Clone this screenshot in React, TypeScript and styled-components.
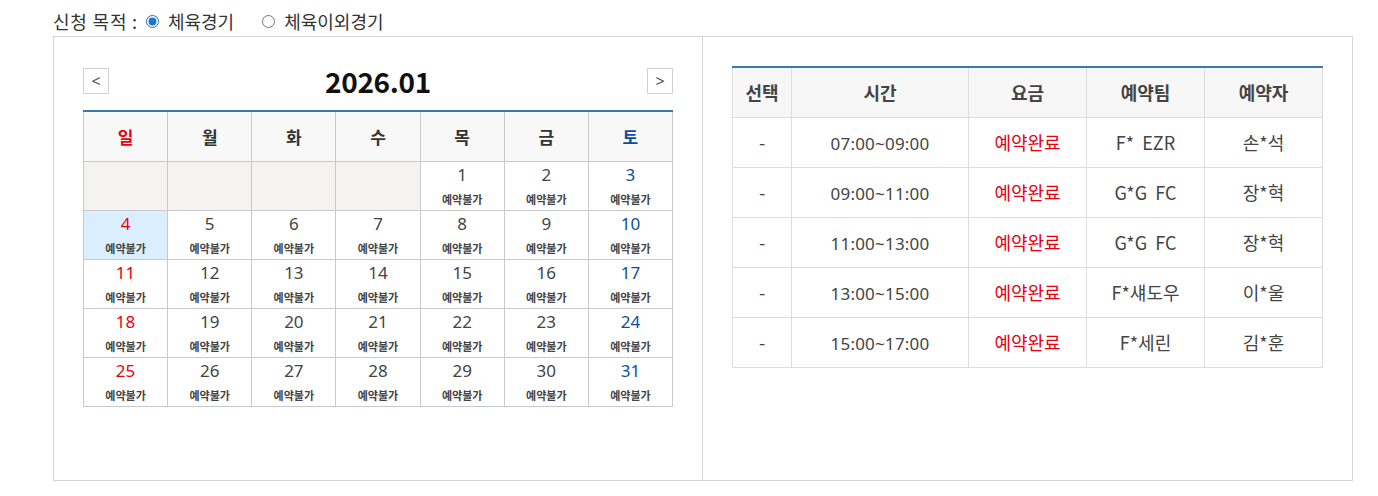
import React from "react";
import styled, { createGlobalStyle } from "styled-components";

const GlobalStyle = createGlobalStyle`
  html, body { margin: 0; padding: 0; background: #fff; }
  body { font-family: "Noto Sans CJK KR", "Noto Sans", sans-serif; color: #333; }
  * { box-sizing: border-box; }
`;

const Page = styled.div`
  padding: 6px 0 0 53px;
  width: 1378px;
`;

const PurposeRow = styled.div`
  display: flex;
  align-items: center;
  height: 30px;
  font-size: 18px;
  line-height: 22px;
  color: #333;
`;

const PurposeLabel = styled.span`
  margin-right: 8px;
  letter-spacing: 0.8px;
`;

const RadioLabel = styled.label<{ $gap?: number }>`
  display: inline-flex;
  align-items: center;
  margin-right: ${(p) => p.$gap ?? 0}px;
  cursor: pointer;
  input {
    margin: 0 9px 0 0;
    width: 13px;
    height: 13px;
    accent-color: #1a73d9;
  }
`;

const Box = styled.div`
  display: grid;
  grid-template-columns: 649px 1fr;
  width: 1300px;
  height: 445px;
  border: 1px solid #d4d4d4;
`;

const LeftPanel = styled.div`
  border-right: 1px solid #d4d4d4;
  padding: 31px 0 0 29px;
`;

const RightPanel = styled.div`
  padding: 29px 0 0 29px;
`;

const CalNav = styled.div`
  display: flex;
  align-items: center;
  justify-content: space-between;
  width: 590px;
  height: 26px;
  margin-bottom: 16px;
`;

const NavButton = styled.button`
  width: 26px;
  height: 26px;
  border: 1px solid #d0d0d0;
  background: #fff;
  color: #555;
  font-family: "Noto Sans", sans-serif;
  font-size: 16px;
  line-height: 22px;
  padding: 0;
  cursor: pointer;
`;

const CalTitle = styled.h2`
  margin: 0;
  font-size: 28px;
  line-height: 30px;
  font-weight: 700;
  color: #111;
  letter-spacing: -0.3px;
`;

const CalTable = styled.table`
  width: 590px;
  border-collapse: collapse;
  table-layout: fixed;
  border-top: 2px solid #3a77b5;
  th, td {
    border: 1px solid #c9c9c9;
    text-align: center;
    padding: 0;
  }
  tr:first-child th { border-top: none; }
`;

const dayColor = (d: string) => (d === "sun" ? "#e60012" : d === "sat" ? "#0b4f9e" : "#333");

const CalHead = styled.th<{ $day: string }>`
  height: 50px;
  background: #f8f8f8;
  font-size: 17px;
  font-weight: 700;
  color: ${(p) => dayColor(p.$day)};
`;

const DayCell = styled.td<{ $empty?: boolean; $selected?: boolean }>`
  height: 49px;
  vertical-align: top;
  background: ${(p) => (p.$empty ? "#f4f3f2" : p.$selected ? "#dbeefd" : "#fff")};
`;

const DayNum = styled.div<{ $day: string }>`
  padding-top: 2px;
  font-family: "Noto Sans", "Noto Sans CJK KR", sans-serif;
  font-size: 17px;
  line-height: 22px;
  color: ${(p) => (p.$day === "sun" ? "#e60012" : p.$day === "sat" ? "#0b4f9e" : "#444")};
`;

const DayStatus = styled.div`
  margin-top: 6px;
  font-size: 11px;
  line-height: 14px;
  font-weight: 700;
  color: #444;
`;

const ResTable = styled.table`
  width: 590px;
  border-collapse: collapse;
  table-layout: fixed;
  border-top: 2px solid #3a77b5;
  th, td {
    border: 1px solid #dcdcdc;
    text-align: center;
    padding: 0;
  }
  tr:first-child th { border-top: none; }
`;

const ResHead = styled.th<{ $w: number }>`
  width: ${(p) => p.$w}px;
  height: 50px;
  background: #f7f7f7;
  font-size: 18px;
  font-weight: 700;
  color: #444;
`;

const ResCell = styled.td<{ $red?: boolean; $pre?: boolean }>`
  height: 50px;
  font-size: 18px;
  white-space: ${(p) => (p.$pre ? "pre" : "normal")};
  color: ${(p) => (p.$red ? "#e60012" : "#444")};
`;

const LatinText = styled.span`
  font-family: "Noto Sans", "Noto Sans CJK KR", sans-serif;
  font-size: 17px;
  letter-spacing: 0.2px;
`;

type Cell = { n?: number; col: number };

const weeks: Cell[][] = (() => {
  const rows: Cell[][] = [];
  let day = 1;
  const first: Cell[] = [];
  for (let c = 0; c < 7; c++) {
    if (c < 4) first.push({ col: c });
    else first.push({ n: day++, col: c });
  }
  rows.push(first);
  while (day <= 31) {
    const r: Cell[] = [];
    for (let c = 0; c < 7; c++) r.push(day <= 31 ? { n: day++, col: c } : { col: c });
    rows.push(r);
  }
  return rows;
})();

const dayNames = ["일", "월", "화", "수", "목", "금", "토"];
const dayKind = (c: number) => (c === 0 ? "sun" : c === 6 ? "sat" : "week");

const reservations = [
  { time: "07:00~09:00", team: "F*  EZR", name: "손*석" },
  { time: "09:00~11:00", team: "G*G  FC", name: "장*혁" },
  { time: "11:00~13:00", team: "G*G  FC", name: "장*혁" },
  { time: "13:00~15:00", team: "F*섀도우", name: "이*울" },
  { time: "15:00~17:00", team: "F*세린", name: "김*훈" },
];

export default function App() {
  return (
    <Page>
      <GlobalStyle />
      <PurposeRow>
        <PurposeLabel>신청 목적 :</PurposeLabel>
        <RadioLabel $gap={28}>
          <input type="radio" name="purpose" defaultChecked />
          체육경기
        </RadioLabel>
        <RadioLabel>
          <input type="radio" name="purpose" />
          체육이외경기
        </RadioLabel>
      </PurposeRow>
      <Box>
        <LeftPanel>
          <CalNav>
            <NavButton>&lt;</NavButton>
            <CalTitle>2026.01</CalTitle>
            <NavButton>&gt;</NavButton>
          </CalNav>
          <CalTable>
            <thead>
              <tr>
                {dayNames.map((d, i) => (
                  <CalHead key={d} $day={dayKind(i)}>
                    {d}
                  </CalHead>
                ))}
              </tr>
            </thead>
            <tbody>
              {weeks.map((w, wi) => (
                <tr key={wi}>
                  {w.map((c) =>
                    c.n ? (
                      <DayCell key={c.col} $selected={c.n === 4}>
                        <DayNum $day={dayKind(c.col)}>{c.n}</DayNum>
                        <DayStatus>예약불가</DayStatus>
                      </DayCell>
                    ) : (
                      <DayCell key={c.col} $empty />
                    )
                  )}
                </tr>
              ))}
            </tbody>
          </CalTable>
        </LeftPanel>
        <RightPanel>
          <ResTable>
            <thead>
              <tr>
                <ResHead $w={59}>선택</ResHead>
                <ResHead $w={177}>시간</ResHead>
                <ResHead $w={118}>요금</ResHead>
                <ResHead $w={118}>예약팀</ResHead>
                <ResHead $w={118}>예약자</ResHead>
              </tr>
            </thead>
            <tbody>
              {reservations.map((r, i) => (
                <tr key={i}>
                  <ResCell>-</ResCell>
                  <ResCell>
                    <LatinText>{r.time}</LatinText>
                  </ResCell>
                  <ResCell $red>예약완료</ResCell>
                  <ResCell $pre>{r.team}</ResCell>
                  <ResCell>{r.name}</ResCell>
                </tr>
              ))}
            </tbody>
          </ResTable>
        </RightPanel>
      </Box>
    </Page>
  );
}
